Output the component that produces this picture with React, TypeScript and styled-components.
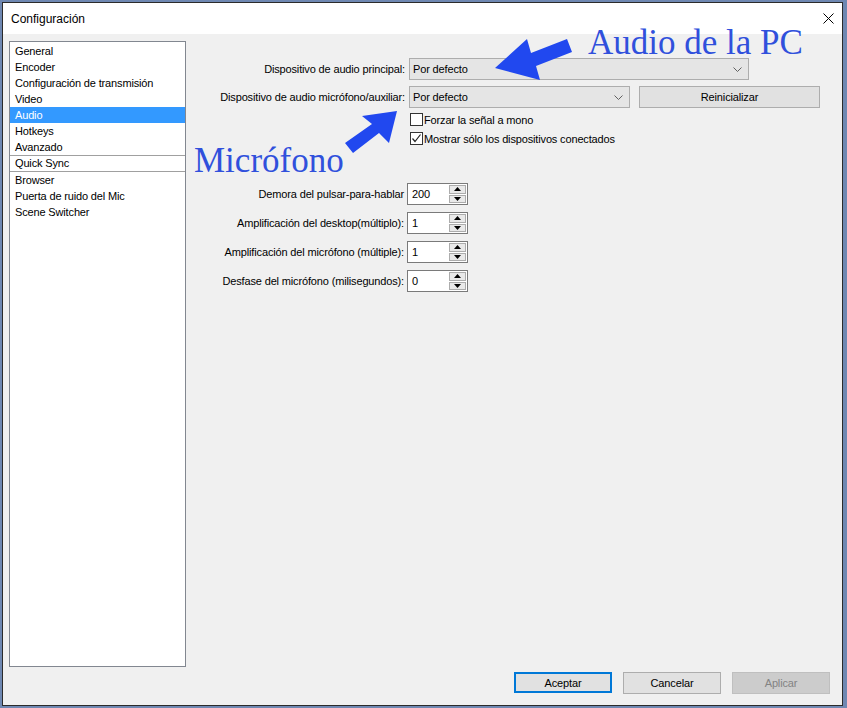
import React from "react";
import styled, { createGlobalStyle } from "styled-components";

const GlobalStyle = createGlobalStyle`
  html, body {
    margin: 0;
    padding: 0;
    background: #6f88b2;
    font-family: "Liberation Sans", Arial, sans-serif;
  }
  #root {
    padding: 2px 0 0 2px;
  }
`;

const Window = styled.div`
  position: relative;
  width: 841px;
  height: 704px;
  box-sizing: border-box;
  border: 1px solid #2b2b2b;
  background: #f0f0f0;
  display: flex;
  flex-direction: column;
  overflow: hidden;
`;

const TitleBar = styled.div`
  height: 31px;
  background: #ffffff;
  display: flex;
  align-items: center;
  justify-content: space-between;
  padding: 0 8px 0 8px;
  font-size: 12px;
  color: #000;
`;

const CloseButton = styled.div`
  width: 11px;
  height: 11px;
  display: flex;
`;

const Body = styled.div`
  flex: 1;
  display: flex;
  flex-direction: column;
  padding: 7px 12px 11px 6px;
  letter-spacing: -0.15px;
`;

const Main = styled.div`
  flex: 1;
  display: flex;
`;

const Sidebar = styled.div`
  width: 177px;
  box-sizing: border-box;
  border: 1px solid #828790;
  background: #ffffff;
  padding-top: 1px;
  font-size: 11px;
`;

const ListItem = styled.div<{ $selected?: boolean; $short?: boolean }>`
  height: ${(p) => (p.$short ? 15 : 16)}px;
  line-height: ${(p) => (p.$short ? 15 : 16)}px;
  padding-left: 5px;
  background: ${(p) => (p.$selected ? "#3399ff" : "transparent")};
  color: ${(p) => (p.$selected ? "#ffffff" : "#000000")};
  white-space: nowrap;
`;

const Separator = styled.div`
  height: 1px;
  background: #a0a0a0;
`;

const Content = styled.div`
  flex: 1;
  padding-top: 17px;
  font-size: 11px;
  color: #000;
`;

const Row = styled.div`
  display: flex;
  align-items: center;
  margin-bottom: 6px;
`;

const Label = styled.div<{ $width: number }>`
  width: ${(p) => p.$width}px;
  text-align: right;
  white-space: nowrap;
  flex-shrink: 0;
`;

const Combo = styled.div<{ $width: number }>`
  width: ${(p) => p.$width}px;
  height: 22px;
  box-sizing: border-box;
  margin-left: 4px;
  border: 1px solid #adadad;
  background: #e5e5e5;
  display: flex;
  align-items: center;
  justify-content: space-between;
  padding: 0 6px 0 3px;
`;

const Button = styled.div<{ $width: number; $primary?: boolean; $disabled?: boolean }>`
  width: ${(p) => p.$width}px;
  height: ${(p) => (p.$primary ? 21 : 22)}px;
  box-sizing: border-box;
  border: ${(p) => (p.$primary ? "2px solid #0078d7" : p.$disabled ? "1px solid #bfbfbf" : "1px solid #adadad")};
  background: ${(p) => (p.$disabled ? "#cccccc" : "#e1e1e1")};
  color: ${(p) => (p.$disabled ? "#838383" : "#000000")};
  display: flex;
  align-items: center;
  justify-content: center;
  font-size: 11px;
`;

const Checks = styled.div`
  margin-left: 224px;
  display: flex;
  flex-direction: column;
  gap: 6px;
  margin-top: -1px;
  margin-bottom: 38px;
`;

const CheckRow = styled.div`
  display: flex;
  align-items: center;
  gap: 1px;
  height: 13px;
`;

const CheckBox = styled.div`
  width: 13px;
  height: 13px;
  box-sizing: border-box;
  border: 1px solid #333333;
  background: #ffffff;
  display: flex;
  align-items: center;
  justify-content: center;
`;

const SpinRow = styled.div`
  display: flex;
  align-items: center;
  margin-bottom: 7px;
`;

const Spin = styled.div`
  margin-left: 3px;
  width: 61px;
  height: 22px;
  box-sizing: border-box;
  border: 1px solid #7a7a7a;
  background: #ffffff;
  display: flex;
`;

const SpinValue = styled.div`
  flex: 1;
  padding-left: 4px;
  line-height: 20px;
`;

const SpinButtons = styled.div`
  width: 17px;
  display: flex;
  flex-direction: column;
  gap: 1px;
  padding: 1px 1px 1px 0;
`;

const SpinButton = styled.div`
  flex: 1;
  box-sizing: border-box;
  border: 1px solid #acacac;
  background: #e9e9e9;
  display: flex;
  align-items: center;
  justify-content: center;
`;

const Spacer = styled.div<{ $width: number }>`
  width: ${(p) => p.$width}px;
  flex-shrink: 0;
`;

const Footer = styled.div`
  display: flex;
  justify-content: flex-end;
  gap: 11px;
  padding-top: 5px;
`;

const Annotation = styled.div<{ $left: number; $top: number }>`
  position: absolute;
  left: ${(p) => p.$left}px;
  top: ${(p) => p.$top}px;
  font-family: "Liberation Serif", "Times New Roman", serif;
  font-size: 35px;
  color: #3050dc;
  white-space: nowrap;
  line-height: 1;
`;

const ArrowSvg = styled.svg`
  position: absolute;
  left: 0;
  top: 0;
  pointer-events: none;
`;

const Chevron = () => (
  <svg width="9" height="5" viewBox="0 0 9 5">
    <path d="M0.5 0.5 L4.5 4.5 L8.5 0.5" fill="none" stroke="#606060" strokeWidth="1" />
  </svg>
);

const Triangle = ({ up }: { up?: boolean }) => (
  <svg width="7" height="4" viewBox="0 0 7 4">
    <path d={up ? "M0 4 L3.5 0 L7 4 Z" : "M0 0 L3.5 4 L7 0 Z"} fill="#000" />
  </svg>
);

const items = [
  "General",
  "Encoder",
  "Configuración de transmisión",
  "Video",
  "Audio",
  "Hotkeys",
  "Avanzado",
];

const spins = [
  { label: "Demora del pulsar-para-hablar", value: "200" },
  { label: "Amplificación del desktop(múltiplo):", value: "1" },
  { label: "Amplificación del micrófono (múltiple):", value: "1" },
  { label: "Desfase del micrófono (milisegundos):", value: "0" },
];

export default function App() {
  return (
    <>
      <GlobalStyle />
      <Window>
        <TitleBar>
          <span>Configuración</span>
          <CloseButton>
            <svg width="11" height="11" viewBox="0 0 11 11">
              <path d="M0.5 0.5 L10.5 10.5 M10.5 0.5 L0.5 10.5" stroke="#000" strokeWidth="1" />
            </svg>
          </CloseButton>
        </TitleBar>
        <Body>
          <Main>
            <Sidebar>
              {items.map((it) => (
                <ListItem key={it} $selected={it === "Audio"}>
                  {it}
                </ListItem>
              ))}
              <Separator />
              <ListItem $short>Quick Sync</ListItem>
              <Separator />
              <ListItem>Browser</ListItem>
              <ListItem>Puerta de ruido del Mic</ListItem>
              <ListItem>Scene Switcher</ListItem>
            </Sidebar>
            <Content>
              <Row>
                <Label $width={219}>Dispositivo de audio principal:</Label>
                <Combo $width={340}>
                  <span>Por defecto</span>
                  <Chevron />
                </Combo>
              </Row>
              <Row>
                <Label $width={219}>Dispositivo de audio micrófono/auxiliar:</Label>
                <Combo $width={221}>
                  <span>Por defecto</span>
                  <Chevron />
                </Combo>
                <Spacer $width={9} />
                <Button $width={181}>Reinicializar</Button>
              </Row>
              <Checks>
                <CheckRow>
                  <CheckBox />
                  <span>Forzar la señal a mono</span>
                </CheckRow>
                <CheckRow>
                  <CheckBox>
                    <svg width="11" height="11" viewBox="0 0 11 11">
                      <path d="M1.5 5.5 L4 8.5 L9.5 1.5" fill="none" stroke="#222" strokeWidth="1.2" />
                    </svg>
                  </CheckBox>
                  <span>Mostrar sólo los dispositivos conectados</span>
                </CheckRow>
              </Checks>
              {spins.map((s) => (
                <SpinRow key={s.label}>
                  <Label $width={218}>{s.label}</Label>
                  <Spin>
                    <SpinValue>{s.value}</SpinValue>
                    <SpinButtons>
                      <SpinButton>
                        <Triangle up />
                      </SpinButton>
                      <SpinButton>
                        <Triangle />
                      </SpinButton>
                    </SpinButtons>
                  </Spin>
                </SpinRow>
              ))}
            </Content>
          </Main>
          <Footer>
            <Button $width={98} $primary>
              Aceptar
            </Button>
            <Button $width={98}>Cancelar</Button>
            <Button $width={98} $disabled>
              Aplicar
            </Button>
          </Footer>
        </Body>
        <Annotation $left={585} $top={22}>
          Audio de la PC
        </Annotation>
        <Annotation $left={191} $top={140}>
          Micrófono
        </Annotation>
        <ArrowSvg width="839" height="702" viewBox="0 0 839 702">
          <g transform="translate(-3 -3)" fill="#2148ef">
            <polygon points="495,68 527,39 531,53 567,39 572,52 536,66 540,80" />
            <polygon points="397,111 389,143 379,133 353,153 345,143 372,124 362,116" />
          </g>
        </ArrowSvg>
      </Window>
    </>
  );
}
